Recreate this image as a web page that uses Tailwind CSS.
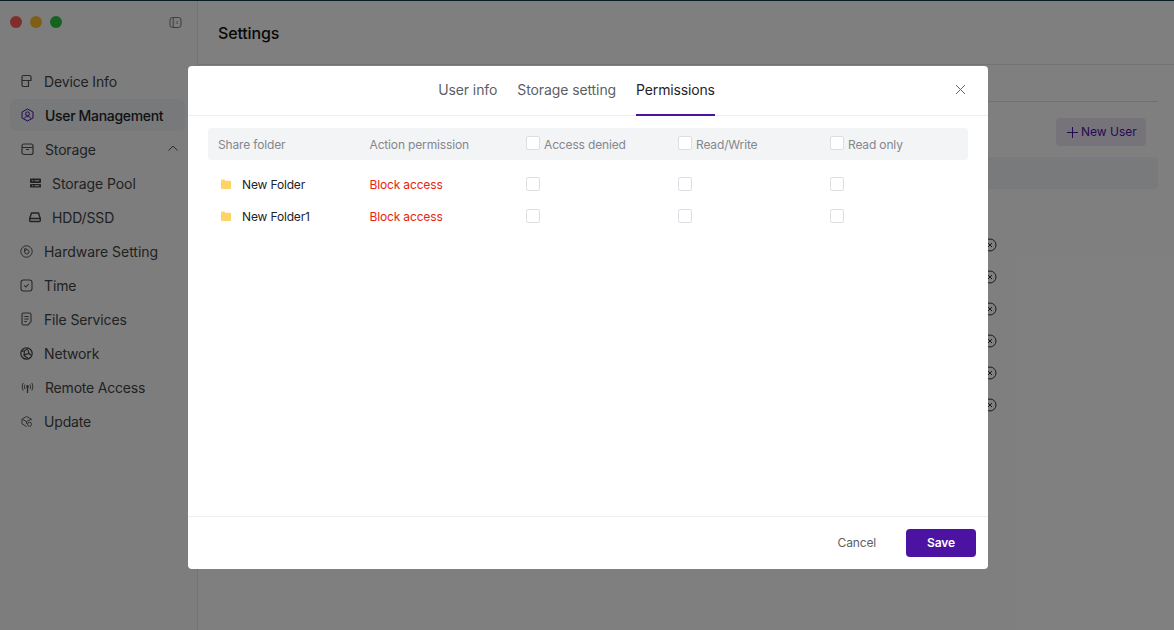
<!DOCTYPE html>
<html>
<head>
<meta charset="utf-8">
<script src="https://cdn.jsdelivr.net/npm/@tailwindcss/browser@4"></script>
</head>
<body class="m-0 overflow-hidden">
<div class="relative w-[1174px] h-[630px] overflow-hidden bg-white text-[14px] tracking-[-0.15px] text-[#1f2329] font-['Inter',sans-serif]">
  <div class="flex h-full border-t border-[#0f3b40]">
    <aside class="w-[198px] shrink-0 border-r border-[#e5e6e8] bg-[#fbfbfc] pl-[10px] pr-[12px]">
      <div class="flex items-center h-[42px] gap-[8px]">
        <span class="w-3 h-3 rounded-full bg-[#ff5f57]"></span>
        <span class="w-3 h-3 rounded-full bg-[#febc2e]"></span>
        <span class="w-3 h-3 rounded-full bg-[#28c840]"></span>
        <svg class="ml-auto mr-[3px]" width="13" height="13" viewBox="0 0 13 13" fill="none" stroke="#777" stroke-width="1"><rect x="1" y="1.500" width="11" height="10" rx="2.500"/><path d="M4.200 1.500v10M8.700 5 7.200 6.500 8.700 8"/></svg>
      </div>
      <nav class="mt-[21px] flex flex-col text-[#444]">
        <a class="flex items-center h-[34px] pl-[11px] gap-[11px]"><svg width="12" height="14" viewBox="0 0 12 14" fill="none" stroke="#555" stroke-width="1.200"><path d="M1 3a1.500 1.500 0 0 1 1.500-1.500h6A1.500 1.500 0 0 1 10 3v3.500H1zM1 6.500V11a1.500 1.500 0 0 0 1.500 1.500H7.500V6.500"/></svg>Device Info</a>
        <a class="flex items-center h-[32px] my-[1px] pl-[11px] gap-[11px] rounded-[6px] bg-[#f0f2f5] font-medium tracking-[-0.33px] text-[#1f2329]"><svg width="13" height="14" viewBox="0 0 13 14" fill="none" stroke="#4c12a1" stroke-width="1"><path d="M6.500 1 12 4v6l-5.500 3L1 10V4z" stroke-linejoin="round"/><circle cx="6.500" cy="5.800" r="1.900"/><path d="M3.300 10.500c.6-1.500 1.700-2 3.200-2s2.600.5 3.200 2"/></svg>User Management</a>
        <a class="flex items-center h-[34px] pl-[11px] gap-[11px]"><svg width="13" height="14" viewBox="0 0 13 14" fill="none" stroke="#555" stroke-width="1.200"><rect x="1" y="2" width="11" height="10.500" rx="2"/><path d="M1 5.500h11M5 7.500h3"/></svg>Storage<svg class="ml-auto mr-[7px] -mt-[3px]" width="10" height="6" viewBox="0 0 10 6" fill="none" stroke="#555"><path d="m.5 5.500 4.500-4.500 4.500 4.500"/></svg></a>
        <a class="flex items-center h-[34px] pl-[20px] gap-[11px] tracking-[-0.08px]"><svg width="11" height="12" viewBox="0 0 12 12" fill="#444"><path fill-rule="evenodd" d="M1 1h10a1 1 0 0 1 1 1v3a1 1 0 0 1-1 1H1a1 1 0 0 1-1-1V2a1 1 0 0 1 1-1zm0 6h10a1 1 0 0 1 1 1v2a1 1 0 0 1-1 1H1a1 1 0 0 1-1-1V8a1 1 0 0 1 1-1zm1-4v1h1.500V3zm3 0v1h5V3zM2 8.500v1h1.500v-1zm3 0v1h5v-1z"/></svg>Storage Pool</a>
        <a class="flex items-center h-[34px] pl-[19px] gap-[11px]"><svg width="12" height="12" viewBox="0 0 12 12" fill="none" stroke="#444" stroke-width="1.400"><path d="M.7 7.500 2.500 2h7l1.800 5.500v2a1 1 0 0 1-1 1h-8.600a1 1 0 0 1-1-1zM.7 7.500h10.600"/></svg>HDD/SSD</a>
        <a class="flex items-center h-[34px] pl-[10px] gap-[11px] tracking-[-0.03px]"><svg width="13" height="13" viewBox="0 0 13 13" fill="none" stroke="#555"><circle cx="6.500" cy="6.500" r="5.700"/><circle cx="6.800" cy="6.800" r="2.200"/><path d="M4.600 6.800V3.800h2"/></svg>Hardware Setting</a>
        <a class="flex items-center h-[34px] pl-[10px] gap-[11px]"><svg width="13" height="13" viewBox="0 0 13 13" fill="none" stroke="#555" stroke-width="1.100"><rect x="1" y="1" width="11" height="11" rx="2.500"/><path d="m4.300 6.300 1.700 1.700 2.700-3"/></svg>Time</a>
        <a class="flex items-center h-[34px] pl-[10px] gap-[11px]"><svg width="13" height="14" viewBox="0 0 13 14" fill="none" stroke="#555" stroke-width="1.100"><path d="M2 2.500A1.500 1.500 0 0 1 3.500 1h6A1.500 1.500 0 0 1 11 2.500v7L8 13H3.500A1.500 1.500 0 0 1 2 11.500zM4.300 4.500h4.400M4.300 7h4.400M4.300 9.500h2.500"/></svg>File Services</a>
        <a class="flex items-center h-[34px] pl-[10px] gap-[11px]"><svg width="13" height="13" viewBox="0 0 13 13" fill="none" stroke="#444" stroke-width="1.200"><circle cx="6.500" cy="6.500" r="5.700"/><path d="M1.500 4.500 5 3.500 8.500 1.500M4.500 4 4 8.500l4 3M4.300 7.800 9 6.500l2.500 2M9 6.500 8 3.200"/></svg>Network</a>
        <a class="flex items-center h-[34px] pl-[11px] gap-[11px] tracking-[-0.2px]"><svg width="13" height="13" viewBox="0 0 13 13" fill="none" stroke="#555" stroke-width="1"><path d="M2.200 2C.9 4.300.9 7.200 2.200 9.500M10.800 2c1.300 2.300 1.300 5.200 0 7.500M4 3.500c-.8 1.500-.8 3 0 4.500M9 3.500c.8 1.500.8 3 0 4.500"/><circle cx="6.500" cy="5.500" r="1" fill="#555"/><path d="M6.500 6v6" stroke-width="1.300"/></svg>Remote Access</a>
        <a class="flex items-center h-[34px] pl-[11px] gap-[12px]"><svg width="11" height="13" viewBox="0 0 12 13" fill="none" stroke="#555" stroke-width="1"><path d="M11.500 5V4L6 1 1 4v5l5 3M1.500 4.300 6 6.500l5-2.300M6 6.500V9"/><circle cx="9.300" cy="9.500" r="2.200"/></svg>Update</a>
      </nav>
    </aside>
    <main class="flex-1 relative">
      <header class="h-[64px] border-b border-[#e5e6e8] flex items-center pl-[20px] text-[16px] font-medium text-[#111]">Settings</header>
      <div class="h-[37px] mx-[16px] border-b border-[#dfe0e3]"></div>
      <div class="flex justify-end mt-[16px] mr-[28px]">
        <button class="flex items-center gap-[3px] h-[28px] w-[90px] pl-[11px] rounded-[4px] bg-[#ede7f6] text-[12px] font-normal tracking-normal text-[#4c12a1]"><svg width="11" height="11" viewBox="0 0 11 11" stroke="#4c12a1" fill="none"><path d="M5.500 0v11M0 5.500h11"/></svg>New User</button>
      </div>
      <div class="h-[32px] mt-[11px] mx-[16px] rounded-[4px] bg-[#f3f4f6]"></div>
      <div class="absolute left-[785px] top-[237px] flex flex-col gap-[18px]">
        <svg width="14" height="14" viewBox="0 0 14 14" fill="none" stroke="#333"><circle cx="7" cy="7" r="6"/><path d="m5 5 4 4M9 5 5 9"/></svg>
        <svg width="14" height="14" viewBox="0 0 14 14" fill="none" stroke="#333"><circle cx="7" cy="7" r="6"/><path d="m5 5 4 4M9 5 5 9"/></svg>
        <svg width="14" height="14" viewBox="0 0 14 14" fill="none" stroke="#333"><circle cx="7" cy="7" r="6"/><path d="m5 5 4 4M9 5 5 9"/></svg>
        <svg width="14" height="14" viewBox="0 0 14 14" fill="none" stroke="#333"><circle cx="7" cy="7" r="6"/><path d="m5 5 4 4M9 5 5 9"/></svg>
        <svg width="14" height="14" viewBox="0 0 14 14" fill="none" stroke="#333"><circle cx="7" cy="7" r="6"/><path d="m5 5 4 4M9 5 5 9"/></svg>
        <svg width="14" height="14" viewBox="0 0 14 14" fill="none" stroke="#333"><circle cx="7" cy="7" r="6"/><path d="m5 5 4 4M9 5 5 9"/></svg>
      </div>
    </main>
  </div>
  <div class="absolute inset-0 bg-black/50"></div>
  <div class="absolute left-[188px] top-[66px] w-[800px] h-[503px] bg-white rounded-[4px] flex flex-col">
    <div class="relative h-[50px] shrink-0 border-b border-[#eceded] flex justify-center gap-[20px] pr-[23px] text-[14px] tracking-[-0.1px] text-[#5c5f66]">
      <span class="pt-[13px]">User info</span>
      <span class="pt-[13px]">Storage setting</span>
      <span class="pt-[13px] h-[50px] border-b-2 border-[#4c12a1] tracking-[-0.15px] text-[#1f2329]">Permissions</span>
      <svg class="absolute right-[22px] top-[18px]" width="11" height="11" viewBox="0 0 11 11" fill="none" stroke="#666"><path d="m1 1 9 9M10 1l-9 9"/></svg>
    </div>
    <div class="flex-1 px-[20px] pt-[12px] text-[12px]">
      <div class="grid grid-cols-[161.500px_156.500px_152px_152px_1fr] items-center h-[32px] rounded-[4px] bg-[#f3f4f6] text-[#84878d]">
        <span class="pl-[10px] pt-[2px]">Share folder</span>
        <span class="pt-[2px]">Action permission</span>
        <span class="flex items-center gap-[4px]"><i class="w-[14px] h-[14px] -mt-[2px] rounded-[2px] border border-[#dcdee3] bg-white"></i><span class="pt-[2px]">Access denied</span></span>
        <span class="flex items-center gap-[4px]"><i class="w-[14px] h-[14px] -mt-[2px] rounded-[2px] border border-[#dcdee3] bg-white"></i><span class="pt-[2px]">Read/Write</span></span>
        <span class="flex items-center gap-[4px]"><i class="w-[14px] h-[14px] -mt-[2px] rounded-[2px] border border-[#dcdee3] bg-white"></i><span class="pt-[2px]">Read only</span></span>
      </div>
      <div class="grid grid-cols-[161.500px_156.500px_152px_152px_1fr] items-center h-[32px] mt-[8px]">
        <span class="flex items-center pl-[13px] gap-[11px] text-[#1f2329]"><svg width="10" height="10" viewBox="0 0 10 10"><path d="M0 1.500a1 1 0 0 1 1-1h2.500l1 1.200H9a1 1 0 0 1 1 1V9a1 1 0 0 1-1 1H1a1 1 0 0 1-1-1z" fill="#ffd466"/></svg><span class="pt-[2px]">New Folder</span></span>
        <span class="text-[#e8230f] pt-[2px]">Block access</span>
        <i class="w-[14px] h-[14px] -mt-[1px] rounded-[2px] border border-[#dcdee3]"></i>
        <i class="w-[14px] h-[14px] -mt-[1px] rounded-[2px] border border-[#dcdee3]"></i>
        <i class="w-[14px] h-[14px] -mt-[1px] rounded-[2px] border border-[#dcdee3]"></i>
      </div>
      <div class="grid grid-cols-[161.500px_156.500px_152px_152px_1fr] items-center h-[32px]">
        <span class="flex items-center pl-[13px] gap-[11px] text-[#1f2329]"><svg width="10" height="10" viewBox="0 0 10 10"><path d="M0 1.500a1 1 0 0 1 1-1h2.500l1 1.200H9a1 1 0 0 1 1 1V9a1 1 0 0 1-1 1H1a1 1 0 0 1-1-1z" fill="#ffd466"/></svg><span class="pt-[2px]">New Folder1</span></span>
        <span class="text-[#e8230f] pt-[2px]">Block access</span>
        <i class="w-[14px] h-[14px] -mt-[1px] rounded-[2px] border border-[#dcdee3]"></i>
        <i class="w-[14px] h-[14px] -mt-[1px] rounded-[2px] border border-[#dcdee3]"></i>
        <i class="w-[14px] h-[14px] -mt-[1px] rounded-[2px] border border-[#dcdee3]"></i>
      </div>
    </div>
    <div class="h-[53px] shrink-0 border-t border-[#eceded] flex items-center justify-end pr-[12px] text-[12px]">
      <button class="text-[#5c5f66] mr-[30px]">Cancel</button>
      <button class="w-[70px] h-[28px] rounded-[4px] bg-[#4c12a1] text-white font-semibold">Save</button>
    </div>
  </div>
</div>
</body>
</html>
